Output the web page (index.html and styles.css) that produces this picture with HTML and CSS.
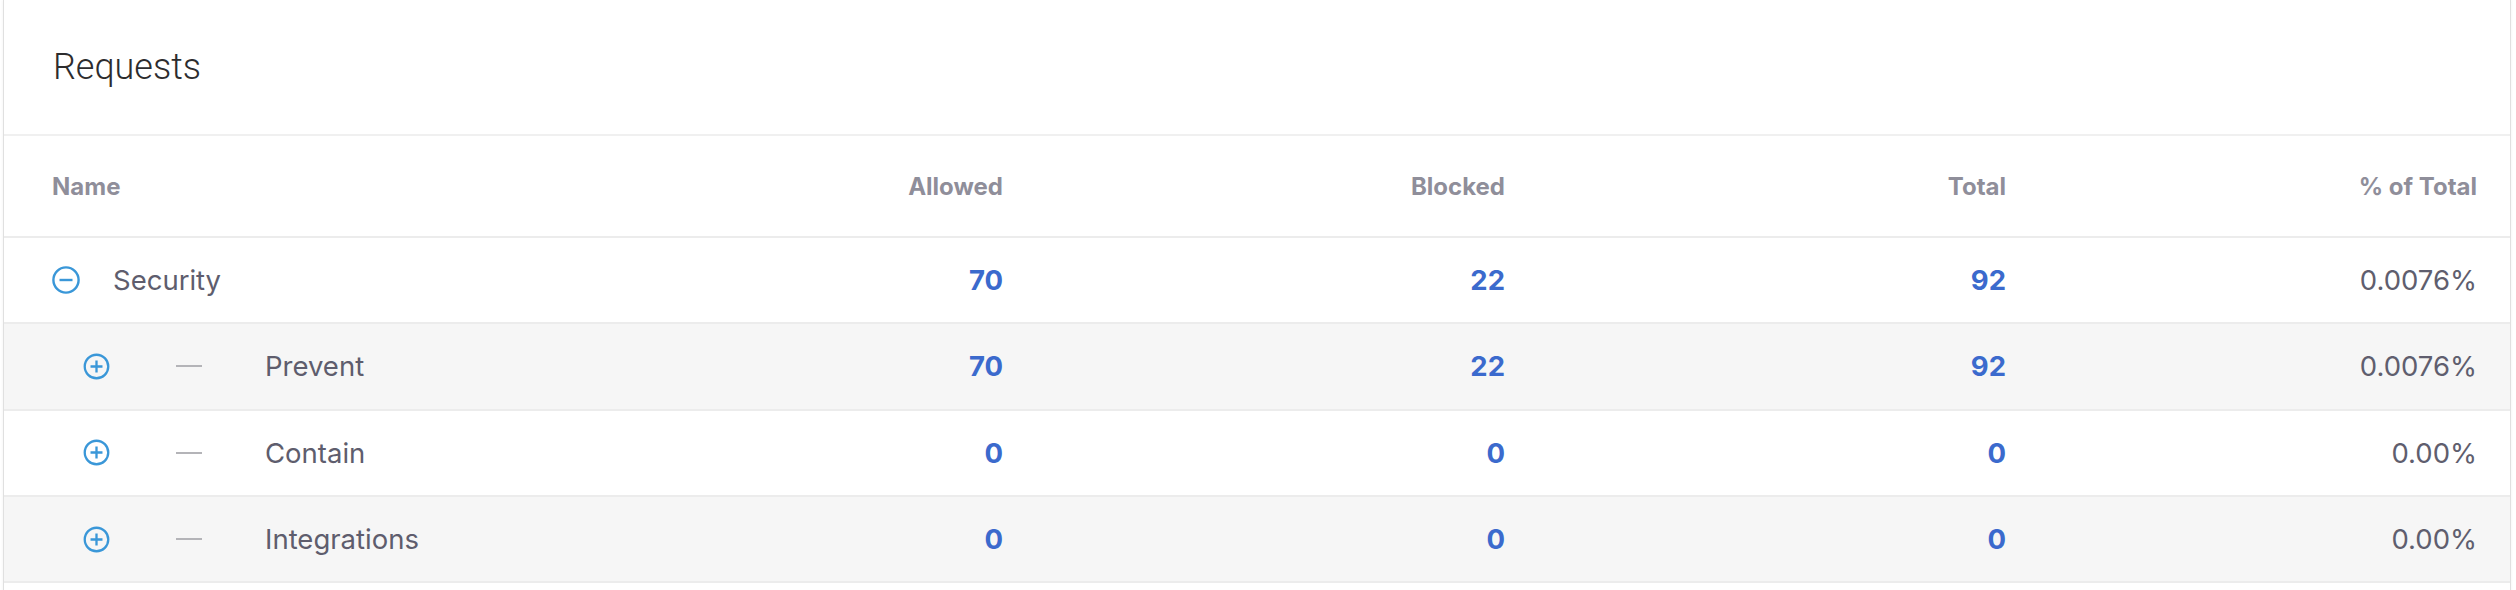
FILE: index.html
```html
<!DOCTYPE html>
<html>
<head>
    <title>Requests</title>
    <link rel="stylesheet" href="styles.css">
</head>
<body>
    <div class="card">
        <div class="card-title">Requests</div>

        <div class="row head">
            <div class="cell name">Name</div>
            <div class="cell">Allowed</div>
            <div class="cell">Blocked</div>
            <div class="cell">Total</div>
            <div class="cell">% of Total</div>
        </div>

        <div class="row">
            <div class="cell name">
                <svg class="toggle" viewBox="0 0 28 28"><circle cx="14" cy="14" r="12.6"/><path d="M7.5 14h13"/></svg>
                <span>Security</span>
            </div>
            <div class="cell num">70</div>
            <div class="cell num">22</div>
            <div class="cell num">92</div>
            <div class="cell pct">0.0076%</div>
        </div>

        <div class="row alt">
            <div class="cell name child">
                <svg class="toggle" viewBox="0 0 28 28"><circle cx="14" cy="14" r="12.2"/><path d="M7.8 14h12.4M14 7.8v12.4"/></svg>
                <span class="dash"></span>
                <span>Prevent</span>
            </div>
            <div class="cell num">70</div>
            <div class="cell num">22</div>
            <div class="cell num">92</div>
            <div class="cell pct">0.0076%</div>
        </div>

        <div class="row">
            <div class="cell name child">
                <svg class="toggle" viewBox="0 0 28 28"><circle cx="14" cy="14" r="12.2"/><path d="M7.8 14h12.4M14 7.8v12.4"/></svg>
                <span class="dash"></span>
                <span>Contain</span>
            </div>
            <div class="cell num">0</div>
            <div class="cell num">0</div>
            <div class="cell num">0</div>
            <div class="cell pct">0.00%</div>
        </div>

        <div class="row alt">
            <div class="cell name child">
                <svg class="toggle" viewBox="0 0 28 28"><circle cx="14" cy="14" r="12.2"/><path d="M7.8 14h12.4M14 7.8v12.4"/></svg>
                <span class="dash"></span>
                <span>Integrations</span>
            </div>
            <div class="cell num">0</div>
            <div class="cell num">0</div>
            <div class="cell num">0</div>
            <div class="cell pct">0.00%</div>
        </div>
    </div>
</body>
</html>
```

FILE: styles.css
```css
body {
    margin: 0;
    background: #fff;
    font-family: Inter, "Noto Sans", sans-serif;
    color: #5e5d6d;
}
.card {
    margin: 0 5px 0 3px;
    height: 600px;
    background: #fff;
    border-left: 1px solid #e0e0e0;
    border-right: 1px solid #e0e0e0;
    box-shadow: 0 0 3px rgba(0, 0, 0, 0.06);
}
.card-title {
    height: 134px;
    display: flex;
    align-items: center;
    padding-left: 49px;
    font-family: Roboto, sans-serif;
    font-weight: 300;
    font-size: 36px;
    color: #2c2c2e;
    border-bottom: 2px solid #f0f0f0;
}
.row {
    display: grid;
    grid-template-columns: 1fr 451px 502px 501px 471px;
    height: 84.3px;
    padding: 0 33px 0 48px;
    border-bottom: 2px solid #ececec;
    font-size: 27.5px;
}
.row.head {
    height: 100px;
    font-size: 24px;
    font-weight: 700;
    color: #8f8e9a;
}
.row.alt {
    background: #f6f6f6;
}
.cell {
    display: flex;
    align-items: center;
    justify-content: flex-end;
}
.cell.name {
    justify-content: flex-start;
}
.num {
    font-weight: 700;
    color: #3b6acd;
}
.pct {
    color: #5f5e6e;
}
.toggle {
    width: 28px;
    height: 28px;
    margin-right: 33px;
    fill: none;
    stroke: #3a97d8;
    stroke-width: 2.4;
}
.child .toggle {
    width: 27px;
    height: 27px;
    margin-left: 31px;
    margin-right: 66px;
}
.dash {
    width: 26px;
    height: 2px;
    background: #b4b4b8;
    margin-right: 63px;
}
```
